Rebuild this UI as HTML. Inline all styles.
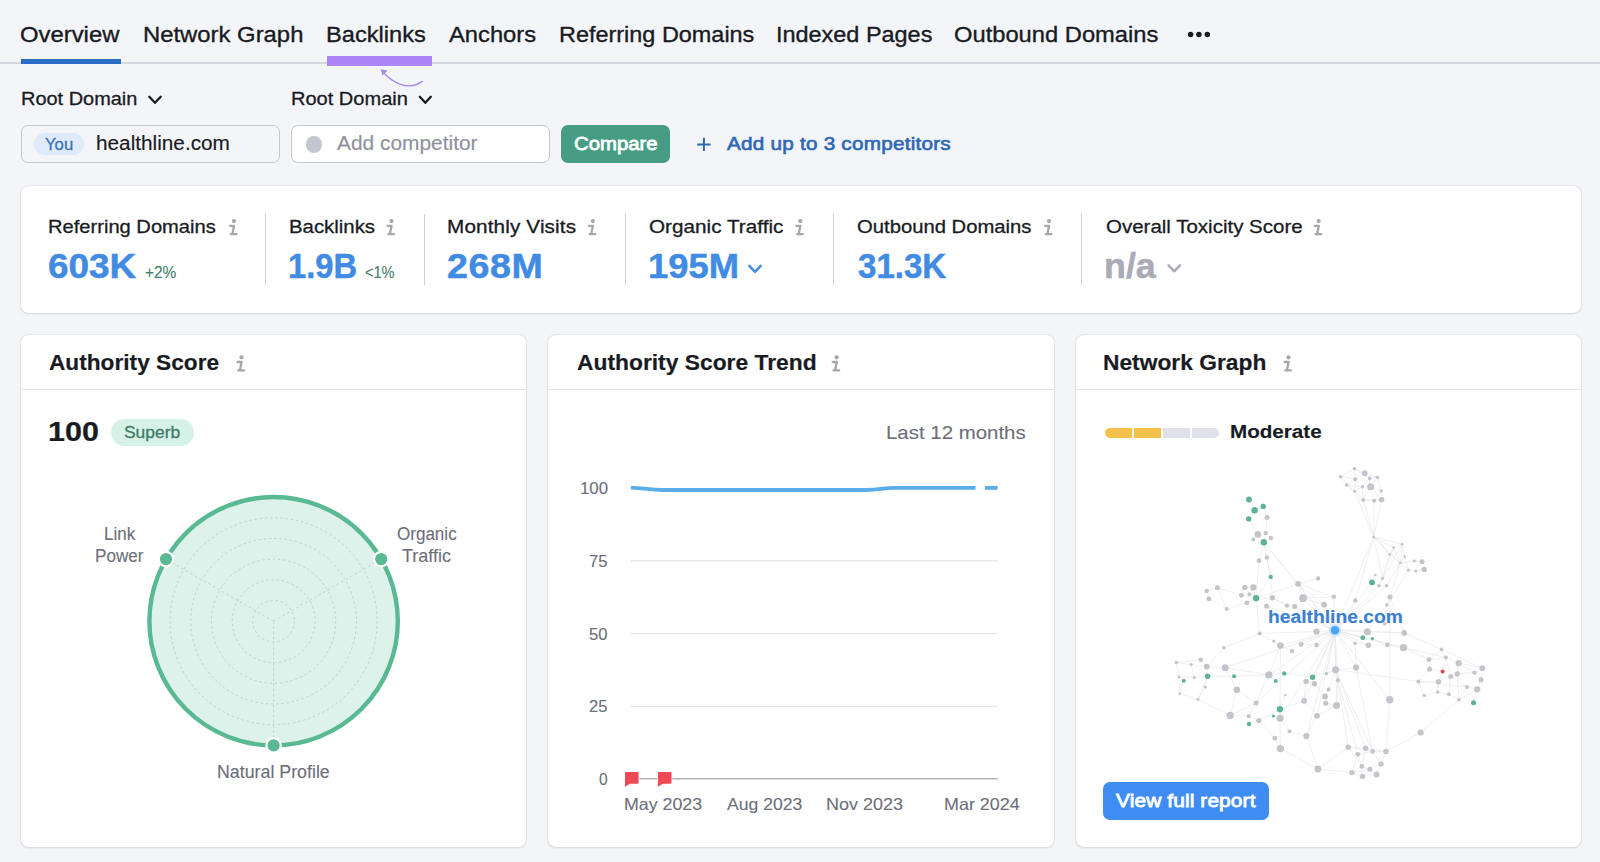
<!DOCTYPE html>
<html><head><meta charset="utf-8">
<style>
*{box-sizing:border-box;margin:0;padding:0}
html,body{width:1600px;height:862px;overflow:hidden;background:#f4f5f9;font-family:"Liberation Sans",sans-serif;color:#191b23}
.abs{position:absolute}
.t{position:absolute;white-space:nowrap;line-height:1;transform-origin:0 0}
.card{position:absolute;background:#fff;border-radius:7.5px;box-shadow:0 0 1.5px rgba(25,27,35,.20),0 1px 2.5px rgba(25,27,35,.10)}
.sep{position:absolute;width:1.3px;background:#cdcfd6;top:213.5px;height:71.5px}
.hd{position:absolute;height:1.3px;background:#e4e5ea;top:389px}
.info{position:absolute;font-family:"Liberation Serif",serif;font-style:italic;font-weight:bold;color:#a9abb6;font-size:21px;line-height:1}
</style></head><body>
<!-- tab bar -->
<div class="abs" style="left:0;top:62.4px;width:1600px;height:1.7px;background:#d5d7de"></div>
<div class="abs" style="left:21px;top:59px;width:100px;height:4.5px;background:#2b6cc4"></div>
<div class="abs" style="left:327px;top:56px;width:105px;height:10px;background:#ad85f6"></div>
<svg class="abs" style="left:370px;top:64px" width="70" height="30" viewBox="370 64 70 30"><path d="M382 71 C392 82.5 408 91.5 422.3 81.4" fill="none" stroke="#a88ae8" stroke-width="1.3" stroke-linecap="round"/><path d="M380.6 69.3 L387.6 70.5 L382.6 75.6 Z" fill="#a88ae8"/></svg>
<svg class="abs" style="left:1184px;top:28px" width="30" height="14" viewBox="1184 28 30 14"><circle cx="1190.6" cy="34.5" r="2.75" fill="#191b23"/><circle cx="1198.9" cy="34.5" r="2.75" fill="#191b23"/><circle cx="1207.3" cy="34.5" r="2.75" fill="#191b23"/></svg>

<!-- domain row -->
<svg class="abs" style="left:146px;top:92px" width="18" height="16" viewBox="146 92 18 16"><path d="M149.3 96.8 L155 102.8 L160.7 96.8" fill="none" stroke="#191b23" stroke-width="2.3" stroke-linecap="round" stroke-linejoin="round"/></svg>
<svg class="abs" style="left:416px;top:92px" width="18" height="16" viewBox="416 92 18 16"><path d="M419.8 96.8 L425.3 102.8 L430.8 96.8" fill="none" stroke="#191b23" stroke-width="2.3" stroke-linecap="round" stroke-linejoin="round"/></svg>
<div class="abs" style="left:21px;top:125px;width:258.5px;height:38px;border:1.2px solid #c4c7cf;border-radius:7px;background:#f4f5f9"></div>
<div class="abs" style="left:33.5px;top:133px;width:50.5px;height:22px;border-radius:11px;background:#dfeafa"></div>
<div class="abs" style="left:291px;top:125px;width:258.5px;height:38px;border:1.2px solid #c4c7cf;border-radius:7px;background:#fff"></div>
<div class="abs" style="left:306.2px;top:136.3px;width:16.3px;height:16.3px;border-radius:50%;background:#c4c7cf"></div>
<div class="abs" style="left:561px;top:125px;width:109px;height:38px;border-radius:7px;background:#469d83"></div>
<svg class="abs" style="left:694px;top:134px" width="20" height="20" viewBox="694 134 20 20"><path d="M697.2 144.4 H710.6 M703.9 137.7 V151.1" fill="none" stroke="#2f68b5" stroke-width="2"/></svg>

<!-- metrics card -->
<div class="card" style="left:21px;top:186px;width:1559.5px;height:127px"></div>
<div class="sep" style="left:265px"></div>
<div class="sep" style="left:423.8px"></div>
<div class="sep" style="left:624.8px"></div>
<div class="sep" style="left:832.5px"></div>
<div class="sep" style="left:1081px"></div>
<svg class="abs" style="left:745px;top:260px" width="20" height="16" viewBox="745 260 20 16"><path d="M749.3 265.8 L755 271.8 L760.7 265.8" fill="none" stroke="#418be3" stroke-width="2.5" stroke-linecap="round" stroke-linejoin="round"/></svg>
<svg class="abs" style="left:1164px;top:260px" width="20" height="16" viewBox="1164 260 20 16"><path d="M1168.5 265.3 L1174.2 271.3 L1179.9 265.3" fill="none" stroke="#a9abb6" stroke-width="2.5" stroke-linecap="round" stroke-linejoin="round"/></svg>

<!-- three cards -->
<div class="card" style="left:21px;top:335.2px;width:505px;height:511.8px"></div>
<div class="card" style="left:548px;top:335.2px;width:505.5px;height:511.8px"></div>
<div class="card" style="left:1076px;top:335.2px;width:504.5px;height:511.8px"></div>
<div class="hd" style="left:21px;width:505px"></div>
<div class="hd" style="left:548px;width:505.5px"></div>
<div class="hd" style="left:1076px;width:504.5px"></div>
<div class="abs" style="left:111.3px;top:418.8px;width:82.5px;height:27px;border-radius:13.5px;background:#d6f1e7"></div>
<!-- risk bar -->
<div class="abs" style="left:1105px;top:427.5px;width:27px;height:10px;background:#f4c14b;border-radius:5px 0 0 5px"></div>
<div class="abs" style="left:1134px;top:427.5px;width:27px;height:10px;background:#f4c14b"></div>
<div class="abs" style="left:1163px;top:427.5px;width:27px;height:10px;background:#e0e1e9"></div>
<div class="abs" style="left:1192px;top:427.5px;width:27.3px;height:10px;background:#e0e1e9;border-radius:0 5px 5px 0"></div>
<!-- button -->
<div class="abs" style="left:1103.3px;top:782px;width:166px;height:38px;border-radius:7px;background:#3f8df2"></div>
<!--INFO-->
<svg class="abs" style="left:0;top:0" width="1600" height="862" viewBox="0 0 1600 862">
<g stroke="#a5a6ae" stroke-width="2.3" fill="none" stroke-linecap="round" stroke-linejoin="round"><path d="M230.1 225.8 H234.1 L232.4 234.1 M230.8 234.1 H236.5"/></g><circle cx="234.0" cy="221.1" r="2.1" fill="#a5a6ae"/>
<g stroke="#a5a6ae" stroke-width="2.3" fill="none" stroke-linecap="round" stroke-linejoin="round"><path d="M387.6 225.8 H391.6 L389.9 234.1 M388.3 234.1 H394.0"/></g><circle cx="391.5" cy="221.1" r="2.1" fill="#a5a6ae"/>
<g stroke="#a5a6ae" stroke-width="2.3" fill="none" stroke-linecap="round" stroke-linejoin="round"><path d="M588.9 225.8 H592.9 L591.2 234.1 M589.6 234.1 H595.3"/></g><circle cx="592.8" cy="221.1" r="2.1" fill="#a5a6ae"/>
<g stroke="#a5a6ae" stroke-width="2.3" fill="none" stroke-linecap="round" stroke-linejoin="round"><path d="M796.4 225.8 H800.4 L798.7 234.1 M797.1 234.1 H802.8"/></g><circle cx="800.3" cy="221.1" r="2.1" fill="#a5a6ae"/>
<g stroke="#a5a6ae" stroke-width="2.3" fill="none" stroke-linecap="round" stroke-linejoin="round"><path d="M1045.1 225.8 H1049.1 L1047.4 234.1 M1045.8 234.1 H1051.5"/></g><circle cx="1049.0" cy="221.1" r="2.1" fill="#a5a6ae"/>
<g stroke="#a5a6ae" stroke-width="2.3" fill="none" stroke-linecap="round" stroke-linejoin="round"><path d="M1314.8 225.8 H1318.8 L1317.1 234.1 M1315.5 234.1 H1321.2"/></g><circle cx="1318.7" cy="221.1" r="2.1" fill="#a5a6ae"/>
<g stroke="#a5a6ae" stroke-width="2.3" fill="none" stroke-linecap="round" stroke-linejoin="round"><path d="M237.6 362.0 H241.6 L239.9 370.3 M238.3 370.3 H244.0"/></g><circle cx="241.5" cy="357.3" r="2.1" fill="#a5a6ae"/>
<g stroke="#a5a6ae" stroke-width="2.3" fill="none" stroke-linecap="round" stroke-linejoin="round"><path d="M832.8 362.0 H836.8 L835.1 370.3 M833.5 370.3 H839.2"/></g><circle cx="836.7" cy="357.3" r="2.1" fill="#a5a6ae"/>
<g stroke="#a5a6ae" stroke-width="2.3" fill="none" stroke-linecap="round" stroke-linejoin="round"><path d="M1284.6 362.0 H1288.6 L1286.9 370.3 M1285.3 370.3 H1291.0"/></g><circle cx="1288.5" cy="357.3" r="2.1" fill="#a5a6ae"/>
<circle cx="273.6" cy="621.2" r="124.2" fill="#ddf2ea" stroke="#59b993" stroke-width="4.4"/>
<circle cx="273.6" cy="621.2" r="20.7" fill="none" stroke="#b7d9cc" stroke-width="1" stroke-dasharray="2.6 2.6"/>
<circle cx="273.6" cy="621.2" r="41.4" fill="none" stroke="#b7d9cc" stroke-width="1" stroke-dasharray="2.6 2.6"/>
<circle cx="273.6" cy="621.2" r="62.1" fill="none" stroke="#b7d9cc" stroke-width="1" stroke-dasharray="2.6 2.6"/>
<circle cx="273.6" cy="621.2" r="82.8" fill="none" stroke="#b7d9cc" stroke-width="1" stroke-dasharray="2.6 2.6"/>
<circle cx="273.6" cy="621.2" r="103.5" fill="none" stroke="#b7d9cc" stroke-width="1" stroke-dasharray="2.6 2.6"/>
<line x1="273.6" y1="621.2" x2="166.0" y2="559.1" stroke="#b7d9cc" stroke-width="1" stroke-dasharray="2.6 2.6"/>
<line x1="273.6" y1="621.2" x2="381.2" y2="559.1" stroke="#b7d9cc" stroke-width="1" stroke-dasharray="2.6 2.6"/>
<line x1="273.6" y1="621.2" x2="273.6" y2="745.4" stroke="#b7d9cc" stroke-width="1" stroke-dasharray="2.6 2.6"/>
<circle cx="166.0" cy="559.1" r="7.2" fill="#59b993" stroke="#fff" stroke-width="2.2"/>
<circle cx="381.2" cy="559.1" r="7.2" fill="#59b993" stroke="#fff" stroke-width="2.2"/>
<circle cx="273.6" cy="745.4" r="7.2" fill="#59b993" stroke="#fff" stroke-width="2.2"/>
<line x1="630.8" y1="560.9" x2="997.8" y2="560.9" stroke="#e4e5ea" stroke-width="1.3"/>
<line x1="630.8" y1="633.6" x2="997.8" y2="633.6" stroke="#e4e5ea" stroke-width="1.3"/>
<line x1="630.8" y1="706.3" x2="997.8" y2="706.3" stroke="#e4e5ea" stroke-width="1.3"/>
<line x1="630.8" y1="778.8" x2="997.8" y2="778.8" stroke="#b5b6bb" stroke-width="1.4"/>
<path d="M631 487.7 C645 488.2 650 490 662 490 L866 490 C880 490 882 487.9 895 487.9 L975.5 487.9" fill="none" stroke="#5badea" stroke-width="3.8" stroke-linecap="butt" stroke-linejoin="round"/>
<path d="M985 487.9 L997.6 487.9" fill="none" stroke="#5badea" stroke-width="3.8"/>
<path d="M626 772 H637.6 a1 1 0 0 1 1 1 V782.7 a1 1 0 0 1 -1 1 H630 L625 786.8 V773 a1 1 0 0 1 1 -1 Z" fill="#ee4a55" stroke="#fff" stroke-width="1.6" paint-order="stroke"/>
<path d="M658.9 772 H670.5 a1 1 0 0 1 1 1 V782.7 a1 1 0 0 1 -1 1 H662.9 L657.9 786.8 V773 a1 1 0 0 1 1 -1 Z" fill="#ee4a55" stroke="#fff" stroke-width="1.6" paint-order="stroke"/>
<g stroke="#e7e8ec" stroke-width="0.7" fill="none">
<path d="M1335.0 630.2L1263.8 542.3M1335.0 630.2L1298.0 583.8M1335.0 630.2L1272.3 597.8M1335.0 630.2L1303.0 598.2M1335.0 630.2L1333.9 596.8M1335.0 630.2L1266.7 606.2M1335.0 630.2L1294.7 606.6M1335.0 630.2L1324.1 604.7M1335.0 630.2L1316.6 631.5M1335.0 630.2L1373.7 536.9M1335.0 630.2L1378.9 585.7M1335.0 630.2L1386.6 585.7M1335.0 630.2L1355.3 600.5M1335.0 630.2L1367.4 631.7M1335.0 630.2L1404.2 632.9M1335.0 630.2L1372.0 582.4M1335.0 630.2L1280.5 645.5M1335.0 630.2L1301.2 644.4M1335.0 630.2L1225.2 667.8M1335.0 630.2L1335.6 669.7M1335.0 630.2L1326.4 673.7M1335.0 630.2L1268.8 674.9M1335.0 630.2L1337.9 680.3M1335.0 630.2L1304.1 700.8M1335.0 630.2L1336.5 705.4M1335.0 630.2L1256.1 703.1M1335.0 630.2L1317.0 715.8M1335.0 630.2L1280.1 718.3M1335.0 630.2L1306.4 736.1M1335.0 630.2L1312.6 677.2M1335.0 630.2L1355.1 643.2M1335.0 630.2L1368.4 645.3M1335.0 630.2L1387.4 644.8M1335.0 630.2L1403.5 647.6M1335.0 630.2L1356.1 667.6M1335.0 630.2L1389.7 699.8M1335.0 630.2L1362.8 637.7M1249.0 499.5L1254.6 510.3M1254.6 510.3L1263.2 506.4M1254.6 510.3L1248.7 518.9M1263.2 506.4L1267.1 517.6M1248.7 518.9L1257.9 534.4M1263.8 542.3L1270.7 576.9M1263.8 542.3L1257.9 534.4M1263.8 542.3L1265.7 533.1M1263.8 542.3L1270.9 537.9M1263.8 542.3L1266.9 557.5M1263.8 542.3L1259.0 560.7M1263.8 542.3L1298.0 583.8M1270.7 576.9L1256.1 598.2M1270.7 576.9L1266.9 557.5M1270.7 576.9L1272.3 597.8M1256.1 598.2L1259.0 560.7M1256.1 598.2L1298.0 583.8M1256.1 598.2L1253.3 587.4M1256.1 598.2L1241.4 595.3M1256.1 598.2L1249.4 594.3M1256.1 598.2L1272.3 597.8M1256.1 598.2L1246.9 602.8M1256.1 598.2L1266.7 606.2M1256.1 598.2L1259.6 633.5M1267.1 517.6L1265.7 533.1M1257.9 534.4L1253.3 539.6M1318.1 578.4L1298.0 583.8M1298.0 583.8L1303.0 598.2M1298.0 583.8L1333.9 596.8M1298.0 583.8L1324.1 604.7M1244.8 587.4L1253.3 587.4M1244.8 587.4L1241.4 595.3M1217.4 587.8L1206.8 590.9M1217.4 587.8L1241.4 595.3M1217.4 587.8L1226.8 609.1M1206.8 590.9L1208.9 598.9M1208.9 598.9L1226.8 609.1M1272.3 597.8L1287.0 605.6M1303.0 598.2L1333.9 596.8M1303.0 598.2L1294.7 606.6M1303.0 598.2L1324.1 604.7M1246.9 602.8L1226.8 609.1M1287.0 605.6L1294.7 606.6M1316.6 631.5L1259.6 633.5M1259.6 633.5L1280.5 645.5M1259.6 633.5L1223.9 647.8M1354.5 468.8L1364.7 473.2M1354.5 468.8L1340.5 476.7M1354.5 468.8L1355.3 479.2M1354.5 468.8L1369.7 478.4M1364.7 473.2L1355.3 479.2M1364.7 473.2L1369.7 478.4M1364.7 473.2L1377.4 477.3M1340.5 476.7L1355.3 479.2M1340.5 476.7L1346.7 485.1M1340.5 476.7L1354.7 491.3M1355.3 479.2L1346.7 485.1M1355.3 479.2L1362.4 486.7M1355.3 479.2L1354.7 491.3M1369.7 478.4L1377.4 477.3M1369.7 478.4L1362.4 486.7M1369.7 478.4L1370.7 486.7M1377.4 477.3L1370.7 486.7M1377.4 477.3L1381.4 490.9M1346.7 485.1L1362.4 486.7M1346.7 485.1L1354.7 491.3M1362.4 486.7L1370.7 486.7M1362.4 486.7L1354.7 491.3M1362.4 486.7L1363.2 499.9M1370.7 486.7L1381.4 490.9M1370.7 486.7L1363.2 499.9M1370.7 486.7L1374.1 500.7M1370.7 486.7L1381.6 499.7M1354.7 491.3L1363.2 499.9M1354.7 491.3L1373.7 536.9M1381.4 490.9L1374.1 500.7M1381.4 490.9L1381.6 499.7M1363.2 499.9L1374.1 500.7M1363.2 499.9L1381.6 499.7M1363.2 499.9L1373.7 536.9M1374.1 500.7L1381.6 499.7M1374.1 500.7L1373.7 536.9M1381.6 499.7L1373.7 536.9M1373.7 536.9L1402.1 544.2M1373.7 536.9L1393.5 547.5M1373.7 536.9L1389.5 554.4M1373.7 536.9L1400.4 563.0M1373.7 536.9L1382.6 578.6M1373.7 536.9L1355.3 600.5M1402.1 544.2L1393.5 547.5M1402.1 544.2L1404.6 556.7M1402.1 544.2L1400.4 563.0M1402.1 544.2L1382.6 578.6M1393.5 547.5L1389.5 554.4M1393.5 547.5L1400.4 563.0M1393.5 547.5L1378.9 585.7M1389.5 554.4L1400.4 563.0M1389.5 554.4L1382.6 578.6M1404.6 556.7L1400.4 563.0M1404.6 556.7L1408.5 570.1M1400.4 563.0L1414.2 560.9M1400.4 563.0L1408.5 570.1M1400.4 563.0L1386.6 585.7M1400.4 563.0L1390.0 597.0M1414.2 560.9L1422.1 561.7M1424.2 569.4L1415.8 570.9M1408.5 570.1L1415.8 570.9M1408.5 570.1L1386.8 604.9M1375.3 575.1L1382.6 578.6M1382.6 578.6L1378.9 585.7M1378.9 585.7L1386.6 585.7M1378.9 585.7L1372.0 582.4M1390.0 597.0L1386.8 604.9M1390.0 597.0L1404.2 632.9M1390.0 597.0L1389.7 699.8M1386.8 604.9L1367.4 631.7M1386.8 604.9L1384.7 623.7M1367.4 631.7L1404.2 632.9M1404.2 632.9L1441.5 649.4M1273.8 641.1L1280.5 645.5M1280.5 645.5L1292.0 651.1M1280.5 645.5L1268.8 674.9M1280.5 645.5L1280.1 718.3M1301.2 644.4L1316.6 645.0M1223.9 647.8L1206.8 666.6M1200.7 659.7L1176.3 662.6M1200.7 659.7L1206.8 666.6M1176.3 662.6L1191.1 664.5M1176.3 662.6L1178.8 677.0M1191.1 664.5L1206.8 666.6M1191.1 664.5L1194.2 677.6M1206.8 666.6L1225.2 667.8M1206.8 666.6L1207.6 676.2M1225.2 667.8L1268.8 674.9M1225.2 667.8L1236.8 689.7M1335.6 669.7L1326.4 673.7M1335.6 669.7L1337.9 680.3M1335.6 669.7L1328.5 689.5M1335.6 669.7L1312.6 677.2M1335.6 669.7L1356.1 667.6M1335.6 669.7L1418.4 681.6M1335.6 669.7L1365.7 748.2M1335.6 669.7L1372.6 751.5M1268.8 674.9L1256.1 703.1M1268.8 674.9L1234.1 676.2M1268.8 674.9L1284.2 673.4M1268.8 674.9L1275.7 681.0M1178.8 677.0L1194.2 677.6M1178.8 677.0L1179.8 693.9M1178.8 677.0L1183.8 680.8M1194.2 677.6L1207.6 676.2M1306.2 681.4L1314.5 683.7M1306.2 681.4L1304.1 700.8M1314.5 683.7L1325.0 696.4M1337.9 680.3L1336.5 705.4M1337.9 680.3L1348.2 747.2M1337.9 680.3L1357.8 754.3M1205.3 687.0L1198.0 699.5M1205.3 687.0L1207.6 676.2M1328.5 689.5L1325.0 696.4M1236.8 689.7L1256.1 703.1M1236.8 689.7L1230.2 715.4M1179.8 693.9L1198.0 699.5M1179.8 693.9L1183.8 680.8M1285.3 695.0L1279.9 709.2M1325.0 696.4L1325.8 703.3M1198.0 699.5L1230.2 715.4M1198.0 699.5L1207.6 676.2M1304.1 700.8L1317.0 715.8M1304.1 700.8L1279.9 709.2M1325.8 703.3L1336.5 705.4M1336.5 705.4L1317.0 715.8M1256.1 703.1L1230.2 715.4M1256.1 703.1L1248.7 716.3M1230.2 715.4L1248.7 716.3M1248.7 716.3L1258.8 720.6M1317.0 715.8L1306.4 736.1M1280.1 718.3L1289.5 731.3M1280.1 718.3L1280.3 748.6M1280.1 718.3L1279.9 709.2M1280.1 718.3L1273.4 716.0M1258.8 720.6L1274.8 738.2M1258.8 720.6L1279.9 709.2M1258.8 720.6L1249.0 724.0M1289.5 731.3L1306.4 736.1M1306.4 736.1L1317.9 769.1M1274.8 738.2L1280.3 748.6M1280.3 748.6L1317.9 769.1M1317.9 769.1L1348.2 747.2M1317.9 769.1L1351.9 772.6M1207.6 676.2L1234.1 676.2M1284.2 673.4L1312.6 677.2M1355.1 643.2L1368.4 645.3M1355.1 643.2L1356.1 667.6M1368.4 645.3L1387.4 644.8M1387.4 644.8L1403.5 647.6M1387.4 644.8L1372.4 638.6M1403.5 647.6L1445.9 657.6M1403.5 647.6L1429.0 659.7M1441.5 649.4L1445.9 657.6M1441.5 649.4L1429.0 659.7M1441.5 649.4L1482.3 668.2M1445.9 657.6L1429.0 659.7M1445.9 657.6L1458.7 663.2M1445.9 657.6L1450.7 676.4M1445.9 657.6L1442.6 671.4M1429.0 659.7L1429.6 669.3M1458.7 663.2L1482.3 668.2M1458.7 663.2L1457.2 673.9M1458.7 663.2L1474.5 672.6M1482.3 668.2L1474.5 672.6M1482.3 668.2L1481.0 679.7M1429.6 669.3L1418.4 681.6M1429.6 669.3L1442.6 671.4M1356.1 667.6L1372.6 751.5M1457.2 673.9L1474.5 672.6M1457.2 673.9L1450.7 676.4M1457.2 673.9L1458.9 699.8M1474.5 672.6L1481.0 679.7M1450.7 676.4L1438.4 681.8M1450.7 676.4L1467.0 687.0M1450.7 676.4L1448.8 694.3M1481.0 679.7L1477.2 689.3M1418.4 681.6L1438.4 681.8M1418.4 681.6L1467.0 687.0M1418.4 681.6L1424.2 695.4M1438.4 681.8L1437.6 692.0M1438.4 681.8L1442.6 671.4M1467.0 687.0L1477.2 689.3M1467.0 687.0L1458.9 699.8M1477.2 689.3L1458.9 699.8M1477.2 689.3L1473.5 702.7M1437.6 692.0L1448.8 694.3M1437.6 692.0L1424.2 695.4M1448.8 694.3L1458.9 699.8M1389.7 699.8L1386.0 751.5M1458.9 699.8L1420.6 732.5M1420.6 732.5L1386.0 751.5M1348.2 747.2L1365.7 748.2M1348.2 747.2L1372.6 751.5M1348.2 747.2L1357.8 754.3M1348.2 747.2L1361.8 766.4M1365.7 748.2L1372.6 751.5M1365.7 748.2L1386.0 751.5M1365.7 748.2L1357.8 754.3M1365.7 748.2L1361.8 766.4M1372.6 751.5L1386.0 751.5M1372.6 751.5L1357.8 754.3M1372.6 751.5L1381.0 763.9M1386.0 751.5L1381.0 763.9M1386.0 751.5L1369.9 769.3M1357.8 754.3L1361.8 766.4M1357.8 754.3L1351.9 772.6M1381.0 763.9L1369.9 769.3M1381.0 763.9L1376.6 774.5M1361.8 766.4L1369.9 769.3M1361.8 766.4L1351.9 772.6M1361.8 766.4L1376.6 774.5M1361.8 766.4L1362.4 776.4M1369.9 769.3L1351.9 772.6M1369.9 769.3L1376.6 774.5M1369.9 769.3L1362.4 776.4M1351.9 772.6L1362.4 776.4M1376.6 774.5L1362.4 776.4M1362.8 637.7L1372.4 638.6"/></g>
<g fill="#c4c5cb">
<circle cx="1267.1" cy="517.6" r="2.5"/>
<circle cx="1257.9" cy="534.4" r="3.3"/>
<circle cx="1265.7" cy="533.1" r="2.2"/>
<circle cx="1270.9" cy="537.9" r="2.2"/>
<circle cx="1253.3" cy="539.6" r="2.0"/>
<circle cx="1266.9" cy="557.5" r="2.2"/>
<circle cx="1259.0" cy="560.7" r="2.4"/>
<circle cx="1318.1" cy="578.4" r="2.2"/>
<circle cx="1298.0" cy="583.8" r="2.9"/>
<circle cx="1244.8" cy="587.4" r="2.7"/>
<circle cx="1253.3" cy="587.4" r="3.2"/>
<circle cx="1217.4" cy="587.8" r="2.5"/>
<circle cx="1206.8" cy="590.9" r="2.2"/>
<circle cx="1208.9" cy="598.9" r="2.4"/>
<circle cx="1241.4" cy="595.3" r="2.4"/>
<circle cx="1249.4" cy="594.3" r="2.0"/>
<circle cx="1272.3" cy="597.8" r="2.7"/>
<circle cx="1303.0" cy="598.2" r="3.9"/>
<circle cx="1333.9" cy="596.8" r="2.2"/>
<circle cx="1246.9" cy="602.8" r="2.4"/>
<circle cx="1266.7" cy="606.2" r="2.5"/>
<circle cx="1287.0" cy="605.6" r="2.2"/>
<circle cx="1294.7" cy="606.6" r="2.5"/>
<circle cx="1324.1" cy="604.7" r="2.9"/>
<circle cx="1226.8" cy="609.1" r="2.0"/>
<circle cx="1316.6" cy="631.5" r="3.1"/>
<circle cx="1259.6" cy="633.5" r="2.0"/>
<circle cx="1354.5" cy="468.8" r="1.8"/>
<circle cx="1364.7" cy="473.2" r="2.9"/>
<circle cx="1340.5" cy="476.7" r="1.8"/>
<circle cx="1355.3" cy="479.2" r="2.0"/>
<circle cx="1369.7" cy="478.4" r="1.8"/>
<circle cx="1377.4" cy="477.3" r="1.8"/>
<circle cx="1346.7" cy="485.1" r="1.8"/>
<circle cx="1362.4" cy="486.7" r="1.6"/>
<circle cx="1370.7" cy="486.7" r="3.5"/>
<circle cx="1354.7" cy="491.3" r="1.5"/>
<circle cx="1381.4" cy="490.9" r="1.6"/>
<circle cx="1363.2" cy="499.9" r="2.0"/>
<circle cx="1374.1" cy="500.7" r="2.0"/>
<circle cx="1381.6" cy="499.7" r="2.7"/>
<circle cx="1373.7" cy="536.9" r="1.5"/>
<circle cx="1402.1" cy="544.2" r="1.3"/>
<circle cx="1393.5" cy="547.5" r="1.3"/>
<circle cx="1389.5" cy="554.4" r="1.3"/>
<circle cx="1404.6" cy="556.7" r="1.3"/>
<circle cx="1400.4" cy="563.0" r="1.3"/>
<circle cx="1414.2" cy="560.9" r="1.5"/>
<circle cx="1422.1" cy="561.7" r="2.5"/>
<circle cx="1424.2" cy="569.4" r="2.7"/>
<circle cx="1408.5" cy="570.1" r="1.5"/>
<circle cx="1415.8" cy="570.9" r="1.5"/>
<circle cx="1375.3" cy="575.1" r="1.3"/>
<circle cx="1382.6" cy="578.6" r="1.5"/>
<circle cx="1378.9" cy="585.7" r="1.8"/>
<circle cx="1386.6" cy="585.7" r="1.8"/>
<circle cx="1390.0" cy="597.0" r="2.5"/>
<circle cx="1386.8" cy="604.9" r="1.8"/>
<circle cx="1355.3" cy="600.5" r="2.2"/>
<circle cx="1367.4" cy="631.7" r="3.5"/>
<circle cx="1404.2" cy="632.9" r="2.9"/>
<circle cx="1384.7" cy="623.7" r="1.8"/>
<circle cx="1273.8" cy="641.1" r="1.6"/>
<circle cx="1280.5" cy="645.5" r="3.3"/>
<circle cx="1301.2" cy="644.4" r="2.4"/>
<circle cx="1316.6" cy="645.0" r="2.2"/>
<circle cx="1292.0" cy="651.1" r="2.2"/>
<circle cx="1223.9" cy="647.8" r="1.8"/>
<circle cx="1200.7" cy="659.7" r="2.2"/>
<circle cx="1176.3" cy="662.6" r="1.8"/>
<circle cx="1191.1" cy="664.5" r="1.6"/>
<circle cx="1206.8" cy="666.6" r="2.9"/>
<circle cx="1225.2" cy="667.8" r="3.5"/>
<circle cx="1335.6" cy="669.7" r="3.5"/>
<circle cx="1326.4" cy="673.7" r="1.8"/>
<circle cx="1268.8" cy="674.9" r="3.7"/>
<circle cx="1178.8" cy="677.0" r="1.5"/>
<circle cx="1194.2" cy="677.6" r="1.5"/>
<circle cx="1306.2" cy="681.4" r="2.7"/>
<circle cx="1314.5" cy="683.7" r="2.7"/>
<circle cx="1337.9" cy="680.3" r="2.0"/>
<circle cx="1205.3" cy="687.0" r="1.5"/>
<circle cx="1328.5" cy="689.5" r="2.0"/>
<circle cx="1236.8" cy="689.7" r="3.3"/>
<circle cx="1179.8" cy="693.9" r="1.3"/>
<circle cx="1285.3" cy="695.0" r="1.3"/>
<circle cx="1325.0" cy="696.4" r="2.9"/>
<circle cx="1198.0" cy="699.5" r="1.5"/>
<circle cx="1304.1" cy="700.8" r="2.9"/>
<circle cx="1325.8" cy="703.3" r="2.5"/>
<circle cx="1336.5" cy="705.4" r="3.5"/>
<circle cx="1256.1" cy="703.1" r="2.5"/>
<circle cx="1230.2" cy="715.4" r="3.7"/>
<circle cx="1248.7" cy="716.3" r="2.0"/>
<circle cx="1317.0" cy="715.8" r="2.9"/>
<circle cx="1280.1" cy="718.3" r="3.5"/>
<circle cx="1258.8" cy="720.6" r="2.7"/>
<circle cx="1289.5" cy="731.3" r="2.0"/>
<circle cx="1306.4" cy="736.1" r="3.1"/>
<circle cx="1274.8" cy="738.2" r="2.4"/>
<circle cx="1280.3" cy="748.6" r="3.7"/>
<circle cx="1317.9" cy="769.1" r="3.5"/>
<circle cx="1355.1" cy="643.2" r="1.8"/>
<circle cx="1368.4" cy="645.3" r="2.7"/>
<circle cx="1387.4" cy="644.8" r="2.4"/>
<circle cx="1403.5" cy="647.6" r="3.7"/>
<circle cx="1441.5" cy="649.4" r="1.8"/>
<circle cx="1445.9" cy="657.6" r="2.0"/>
<circle cx="1429.0" cy="659.7" r="2.4"/>
<circle cx="1458.7" cy="663.2" r="3.1"/>
<circle cx="1482.3" cy="668.2" r="2.9"/>
<circle cx="1429.6" cy="669.3" r="2.5"/>
<circle cx="1356.1" cy="667.6" r="3.1"/>
<circle cx="1457.2" cy="673.9" r="2.7"/>
<circle cx="1474.5" cy="672.6" r="2.2"/>
<circle cx="1450.7" cy="676.4" r="2.5"/>
<circle cx="1481.0" cy="679.7" r="2.5"/>
<circle cx="1418.4" cy="681.6" r="2.0"/>
<circle cx="1438.4" cy="681.8" r="2.7"/>
<circle cx="1467.0" cy="687.0" r="2.0"/>
<circle cx="1477.2" cy="689.3" r="3.1"/>
<circle cx="1437.6" cy="692.0" r="1.8"/>
<circle cx="1448.8" cy="694.3" r="2.0"/>
<circle cx="1424.2" cy="695.4" r="1.6"/>
<circle cx="1389.7" cy="699.8" r="3.7"/>
<circle cx="1458.9" cy="699.8" r="1.8"/>
<circle cx="1420.6" cy="732.5" r="3.1"/>
<circle cx="1348.2" cy="747.2" r="2.7"/>
<circle cx="1365.7" cy="748.2" r="2.7"/>
<circle cx="1372.6" cy="751.5" r="2.4"/>
<circle cx="1386.0" cy="751.5" r="2.7"/>
<circle cx="1357.8" cy="754.3" r="2.4"/>
<circle cx="1381.0" cy="763.9" r="2.7"/>
<circle cx="1361.8" cy="766.4" r="2.4"/>
<circle cx="1369.9" cy="769.3" r="2.5"/>
<circle cx="1351.9" cy="772.6" r="2.7"/>
<circle cx="1376.6" cy="774.5" r="2.9"/>
<circle cx="1362.4" cy="776.4" r="2.7"/>
</g>
<g fill="#5db391">
<circle cx="1249.0" cy="499.5" r="2.9"/>
<circle cx="1254.6" cy="510.3" r="3.2"/>
<circle cx="1263.2" cy="506.4" r="2.7"/>
<circle cx="1248.7" cy="518.9" r="2.7"/>
<circle cx="1263.8" cy="542.3" r="3.2"/>
<circle cx="1270.7" cy="576.9" r="2.2"/>
<circle cx="1256.1" cy="598.2" r="3.1"/>
<circle cx="1372.0" cy="582.4" r="2.9"/>
<circle cx="1207.6" cy="676.2" r="2.7"/>
<circle cx="1183.8" cy="680.8" r="2.0"/>
<circle cx="1234.1" cy="676.2" r="2.0"/>
<circle cx="1284.2" cy="673.4" r="2.2"/>
<circle cx="1275.7" cy="681.0" r="2.0"/>
<circle cx="1312.6" cy="677.2" r="2.7"/>
<circle cx="1279.9" cy="709.2" r="3.1"/>
<circle cx="1273.4" cy="716.0" r="1.6"/>
<circle cx="1249.0" cy="724.0" r="2.2"/>
<circle cx="1362.8" cy="637.7" r="2.4"/>
<circle cx="1372.4" cy="638.6" r="1.6"/>
<circle cx="1473.5" cy="702.7" r="2.5"/>
</g>
<g fill="#e0444f">
<circle cx="1442.6" cy="671.4" r="2.0"/>
</g>
<circle cx="1335.0" cy="630.25" r="6.3" fill="#cfe6fb"/><circle cx="1335.0" cy="630.25" r="4.3" fill="#4ea5f5"/>
</svg>
<div class="t" style="left:20.39px;top:23.00px;font-size:22.8px;-webkit-text-stroke:0.36px #191b23;transform:scaleX(1.0459);">Overview</div>
<div class="t" style="left:143.14px;top:23.00px;font-size:22.8px;-webkit-text-stroke:0.36px #191b23;transform:scaleX(1.0463);">Network Graph</div>
<div class="t" style="left:326.15px;top:23.00px;font-size:22.8px;-webkit-text-stroke:0.36px #191b23;transform:scaleX(1.0369);">Backlinks</div>
<div class="t" style="left:449.44px;top:23.00px;font-size:22.8px;-webkit-text-stroke:0.36px #191b23;transform:scaleX(1.0409);">Anchors</div>
<div class="t" style="left:559.16px;top:23.00px;font-size:22.8px;-webkit-text-stroke:0.36px #191b23;transform:scaleX(1.0278);">Referring Domains</div>
<div class="t" style="left:775.63px;top:23.00px;font-size:22.8px;-webkit-text-stroke:0.36px #191b23;transform:scaleX(1.0280);">Indexed Pages</div>
<div class="t" style="left:954.15px;top:23.00px;font-size:22.8px;-webkit-text-stroke:0.36px #191b23;transform:scaleX(1.0403);">Outbound Domains</div>
<div class="t" style="left:20.83px;top:90.34px;font-size:18.5px;-webkit-text-stroke:0.30px #191b23;transform:scaleX(1.0776);">Root Domain</div>
<div class="t" style="left:290.83px;top:90.34px;font-size:18.5px;-webkit-text-stroke:0.30px #191b23;transform:scaleX(1.0823);">Root Domain</div>
<div class="t" style="left:45.13px;top:135.83px;font-size:16.5px;-webkit-text-stroke:0.26px #3873bd;color:#3873bd;transform:scaleX(1.0115);">You</div>
<div class="t" style="left:96.01px;top:134.28px;font-size:19.4px;-webkit-text-stroke:0.16px #191b23;transform:scaleX(1.0709);">healthline.com</div>
<div class="t" style="left:337.08px;top:134.28px;font-size:19.4px;-webkit-text-stroke:0.16px #8f929c;color:#8f929c;transform:scaleX(1.0774);">Add competitor</div>
<div class="t" style="left:574.18px;top:134.02px;font-size:19px;-webkit-text-stroke:0.80px #ffffff;color:#ffffff;transform:scaleX(1.0693);">Compare</div>
<div class="t" style="left:726.60px;top:133.92px;font-size:19px;-webkit-text-stroke:0.65px #2f68b5;color:#2f68b5;letter-spacing:0.205px;transform:scaleX(1.0900);">Add up to 3 competitors</div>
<div class="t" style="left:48.35px;top:217.22px;font-size:19px;-webkit-text-stroke:0.30px #191b23;transform:scaleX(1.0593);">Referring Domains</div>
<div class="t" style="left:288.59px;top:217.22px;font-size:19px;-webkit-text-stroke:0.30px #191b23;transform:scaleX(1.0723);">Backlinks</div>
<div class="t" style="left:447.08px;top:217.22px;font-size:19px;-webkit-text-stroke:0.30px #191b23;letter-spacing:0.120px;transform:scaleX(1.0900);">Monthly Visits</div>
<div class="t" style="left:648.92px;top:217.22px;font-size:19px;-webkit-text-stroke:0.30px #191b23;letter-spacing:0.006px;transform:scaleX(1.0900);">Organic Traffic</div>
<div class="t" style="left:857.16px;top:217.22px;font-size:19px;-webkit-text-stroke:0.30px #191b23;transform:scaleX(1.0658);">Outbound Domains</div>
<div class="t" style="left:1105.51px;top:217.22px;font-size:19px;-webkit-text-stroke:0.30px #191b23;transform:scaleX(1.0783);">Overall Toxicity Score</div>
<div class="t" style="left:48.44px;top:248.70px;font-size:34.5px;font-weight:bold;-webkit-text-stroke:0.48px #418be3;color:#418be3;transform:scaleX(1.0699);">603K</div>
<div class="t" style="left:287.83px;top:248.70px;font-size:34.5px;font-weight:bold;-webkit-text-stroke:0.48px #418be3;color:#418be3;transform:scaleX(0.9472);">1.9B</div>
<div class="t" style="left:447.17px;top:248.70px;font-size:34.5px;font-weight:bold;-webkit-text-stroke:0.48px #418be3;color:#418be3;letter-spacing:0.515px;transform:scaleX(1.0900);">268M</div>
<div class="t" style="left:647.65px;top:248.70px;font-size:34.5px;font-weight:bold;-webkit-text-stroke:0.48px #418be3;color:#418be3;transform:scaleX(1.0540);">195M</div>
<div class="t" style="left:857.73px;top:248.70px;font-size:34.5px;font-weight:bold;-webkit-text-stroke:0.48px #418be3;color:#418be3;transform:scaleX(0.9579);">31.3K</div>
<div class="t" style="left:1103.52px;top:248.70px;font-size:34.5px;font-weight:bold;-webkit-text-stroke:0.48px #a9abb6;color:#a9abb6;transform:scaleX(1.0392);">n/a</div>
<div class="t" style="left:145.06px;top:263.73px;font-size:16.5px;-webkit-text-stroke:0.13px #43806a;color:#43806a;transform:scaleX(0.9351);">+2%</div>
<div class="t" style="left:364.56px;top:263.73px;font-size:16.5px;-webkit-text-stroke:0.13px #43806a;color:#43806a;transform:scaleX(0.8833);">&lt;1%</div>
<div class="t" style="left:49.34px;top:352.18px;font-size:22px;font-weight:bold;-webkit-text-stroke:0.18px #191b23;transform:scaleX(1.0306);">Authority Score</div>
<div class="t" style="left:576.79px;top:352.18px;font-size:22px;font-weight:bold;-webkit-text-stroke:0.18px #191b23;transform:scaleX(1.0372);">Authority Score Trend</div>
<div class="t" style="left:1102.96px;top:352.18px;font-size:22px;font-weight:bold;-webkit-text-stroke:0.18px #191b23;transform:scaleX(1.0356);">Network Graph</div>
<div class="t" style="left:48.28px;top:418.05px;font-size:28px;font-weight:bold;-webkit-text-stroke:0.22px #191b23;letter-spacing:0.031px;transform:scaleX(1.0900);">100</div>
<div class="t" style="left:124.39px;top:423.53px;font-size:16.5px;-webkit-text-stroke:0.26px #3e7a63;color:#3e7a63;transform:scaleX(1.0558);">Superb</div>
<div class="t" style="left:885.79px;top:422.92px;font-size:19px;-webkit-text-stroke:0.11px #6c6e79;color:#6c6e79;transform:scaleX(1.0753);">Last 12 months</div>
<div class="t" style="left:1230.40px;top:422.02px;font-size:19px;font-weight:bold;-webkit-text-stroke:0.15px #191b23;transform:scaleX(1.0851);">Moderate</div>
<div class="t" style="left:104.28px;top:525.99px;font-size:17.5px;-webkit-text-stroke:0.10px #6c6e79;color:#6c6e79;transform:scaleX(0.9726);">Link</div>
<div class="t" style="left:95.47px;top:547.89px;font-size:17.5px;-webkit-text-stroke:0.10px #6c6e79;color:#6c6e79;transform:scaleX(0.9778);">Power</div>
<div class="t" style="left:397.05px;top:525.99px;font-size:17.5px;-webkit-text-stroke:0.10px #6c6e79;color:#6c6e79;transform:scaleX(0.9735);">Organic</div>
<div class="t" style="left:402.05px;top:547.89px;font-size:17.5px;-webkit-text-stroke:0.10px #6c6e79;color:#6c6e79;transform:scaleX(1.0292);">Traffic</div>
<div class="t" style="left:217.14px;top:763.79px;font-size:17.5px;-webkit-text-stroke:0.10px #6c6e79;color:#6c6e79;transform:scaleX(1.0169);">Natural Profile</div>
<div class="t" style="left:579.63px;top:479.83px;font-size:16.5px;-webkit-text-stroke:0.10px #6c6e79;color:#6c6e79;transform:scaleX(1.0208);">100</div>
<div class="t" style="left:589.25px;top:552.83px;font-size:16.5px;-webkit-text-stroke:0.10px #6c6e79;color:#6c6e79;transform:scaleX(1.0068);">75</div>
<div class="t" style="left:589.25px;top:625.53px;font-size:16.5px;-webkit-text-stroke:0.10px #6c6e79;color:#6c6e79;transform:scaleX(1.0068);">50</div>
<div class="t" style="left:589.25px;top:698.23px;font-size:16.5px;-webkit-text-stroke:0.10px #6c6e79;color:#6c6e79;transform:scaleX(1.0068);">25</div>
<div class="t" style="left:599.05px;top:770.83px;font-size:16.5px;-webkit-text-stroke:0.10px #6c6e79;color:#6c6e79;transform:scaleX(0.9446);">0</div>
<div class="t" style="left:624.18px;top:795.83px;font-size:16.5px;-webkit-text-stroke:0.10px #6c6e79;color:#6c6e79;transform:scaleX(1.0774);">May 2023</div>
<div class="t" style="left:727.45px;top:795.83px;font-size:16.5px;-webkit-text-stroke:0.10px #6c6e79;color:#6c6e79;transform:scaleX(1.0643);">Aug 2023</div>
<div class="t" style="left:826.36px;top:795.83px;font-size:16.5px;-webkit-text-stroke:0.10px #6c6e79;color:#6c6e79;letter-spacing:0.012px;transform:scaleX(1.0900);">Nov 2023</div>
<div class="t" style="left:944.37px;top:795.83px;font-size:16.5px;-webkit-text-stroke:0.10px #6c6e79;color:#6c6e79;transform:scaleX(1.0871);">Mar 2024</div>
<div class="t" style="left:1267.52px;top:607.91px;font-size:18.3px;font-weight:bold;-webkit-text-stroke:0.15px #3d7fd0;color:#3d7fd0;transform:scaleX(1.0542);">healthline.com</div>
<div class="t" style="left:1116.44px;top:791.25px;font-size:19.2px;-webkit-text-stroke:0.81px #ffffff;color:#ffffff;letter-spacing:0.093px;transform:scaleX(1.0900);">View full report</div>
</body></html>
